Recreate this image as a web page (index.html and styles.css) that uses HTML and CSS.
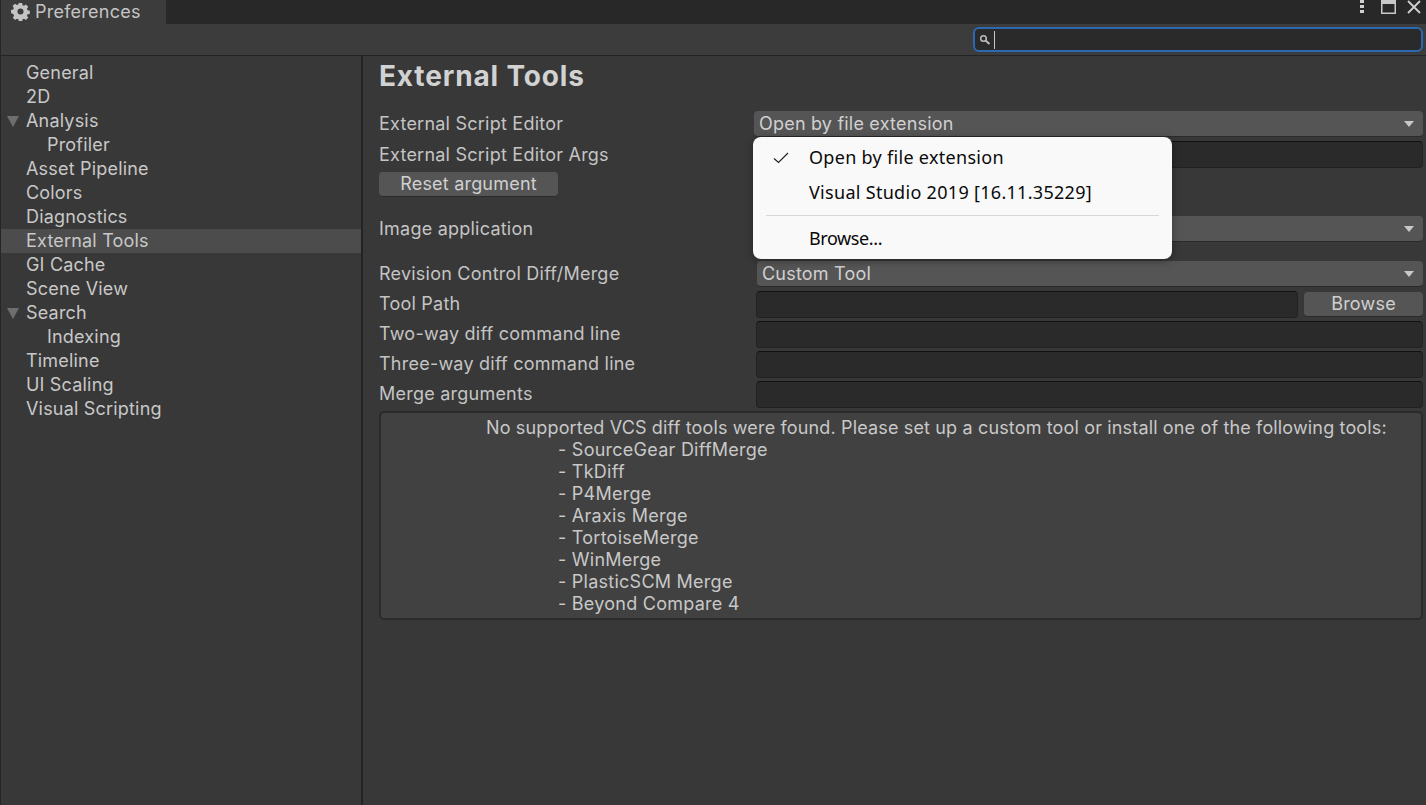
FILE: index.html
```html
<!DOCTYPE html>
<html lang="en">
<head>
<meta charset="utf-8">
<title>Preferences</title>
<link rel="stylesheet" href="styles.css">
</head>
<body>
<div class="window">
  <header class="titlebar">
    <div class="tab">
      <svg class="gear" viewBox="0 0 20 20" width="19" height="19"><path fill="#c4c4c4" fill-rule="evenodd" d="M8.3 1h3.4l.5 2.4 1.5.6 2-1.3 2.4 2.4-1.3 2 .6 1.5 2.4.5v3.4l-2.4.5-.6 1.5 1.3 2-2.4 2.4-2-1.3-1.500.6-.5 2.4H8.300l-.5-2.400-1.500-.6-2 1.300-2.400-2.400 1.300-2-.6-1.500L0 11.700V8.300l2.400-.5.6-1.500-1.300-2 2.400-2.400 2 1.300 1.500-.6zM10 6.800a3.200 3.200 0 1 0 0 6.400 3.200 3.200 0 0 0 0-6.400z"/></svg>
      <span>Preferences</span>
    </div>
    <div class="win-icons">
      <svg viewBox="0 0 5 14" width="5" height="14"><path fill="#d0d0d0" d="M0 0h4v3H0zM0 5h4v3H0zM0 10h4v3H0z"/></svg>
      <svg viewBox="0 0 15 14" width="15" height="14"><path fill="#c8c8c8" fill-rule="evenodd" d="M0 0h15v14H0zM1.500 4v8.500h12V4z"/></svg>
      <svg viewBox="0 0 14 14" width="14" height="14"><path stroke="#d0d0d0" stroke-width="1.800" fill="none" d="M1 1l12 12M13 1L1 13"/></svg>
    </div>
  </header>
  <div class="toolbar">
    <div class="search">
      <svg viewBox="0 0 12 12" width="12" height="12"><circle cx="4.500" cy="4.500" r="2.800" fill="none" stroke="#bdbdbd" stroke-width="1.500"/><path d="M6.800 6.800l3.700 3.200" stroke="#bdbdbd" stroke-width="2"/></svg>
      <i class="caret"></i>
    </div>
  </div>
  <div class="content">
    <nav class="sidebar">
      <div class="item">General</div>
      <div class="item">2D</div>
      <div class="item"><b class="tri"></b>Analysis</div>
      <div class="item sub">Profiler</div>
      <div class="item">Asset Pipeline</div>
      <div class="item">Colors</div>
      <div class="item">Diagnostics</div>
      <div class="item active">External Tools</div>
      <div class="item">GI Cache</div>
      <div class="item">Scene View</div>
      <div class="item"><b class="tri"></b>Search</div>
      <div class="item sub">Indexing</div>
      <div class="item">Timeline</div>
      <div class="item">UI Scaling</div>
      <div class="item">Visual Scripting</div>
    </nav>
    <main class="panel">
      <h1>External Tools</h1>
      <div class="row first"><label>External Script Editor</label><div class="drop wide">Open by file extension<b class="arrow"></b></div></div>
      <div class="row args"><label>External Script Editor Args</label><div class="field wide"></div></div>
      <button class="btn reset">Reset argument</button>
      <div class="row image"><label>Image application</label><div class="drop wide"><b class="arrow"></b></div></div>
      <div class="row rev"><label>Revision Control Diff/Merge</label><div class="drop">Custom Tool<b class="arrow"></b></div></div>
      <div class="row"><label>Tool Path</label><div class="field"></div><button class="btn browse">Browse</button></div>
      <div class="row"><label>Two-way diff command line</label><div class="field"></div></div>
      <div class="row"><label>Three-way diff command line</label><div class="field"></div></div>
      <div class="row"><label>Merge arguments</label><div class="field"></div></div>
      <div class="helpbox">
        <p class="lead">No supported VCS diff tools were found. Please set up a custom tool or install one of the following tools:</p>
        <p>- SourceGear DiffMerge</p>
        <p>- TkDiff</p>
        <p>- P4Merge</p>
        <p>- Araxis Merge</p>
        <p>- TortoiseMerge</p>
        <p>- WinMerge</p>
        <p>- PlasticSCM Merge</p>
        <p>- Beyond Compare 4</p>
      </div>
    </main>
  </div>
  <div class="menu">
    <div class="mi m1"><svg viewBox="0 0 16 12" width="16" height="12"><path d="M1 6.500l4.500 4L15 1" fill="none" stroke="#222" stroke-width="1.200"/></svg>Open by file extension</div>
    <div class="mi m2">Visual Studio 2019 [16.11.35229]</div>
    <hr>
    <div class="mi m3">Browse...</div>
  </div>
</div>
</body>
</html>
```
FILE: styles.css
```css
* { box-sizing: border-box; }
html, body { margin: 0; height: 100%; overflow: hidden; background: #383838; }
.window {
  position: relative; width: 1426px; height: 805px;
  display: flex; flex-direction: column;
  font-family: Inter, "Noto Sans", sans-serif; font-size: 18px; color: #c8c8c8;
  border-left: 1px solid #262626;
}
.titlebar { height: 24px; background: #282828; display: flex; justify-content: space-between; flex: none; }
.tab { width: 165px; background: #3c3c3c; display: flex; align-items: center; padding-left: 10px; padding-bottom: 2px; gap: 5px; letter-spacing: .25px; color: #c4c4c4; }
.gear { flex: none; }
.win-icons { display: flex; align-items: flex-start; padding-right: 5px; }
.win-icons svg:nth-child(1) { margin: 0 16px 0 0; }
.win-icons svg:nth-child(2) { margin: 0 11px 0 0; }
.toolbar { height: 32px; flex: none; background: #3c3c3c; border-bottom: 1px solid #232323; display: flex; justify-content: flex-end; padding: 3px 3px 0 0; align-items: flex-start; }
.search { width: 450px; height: 25px; background: #2a2a2a; border: 2px solid #2b69b0; border-radius: 6px; display: flex; align-items: center; padding-left: 4px; gap: 3px; }
.caret { width: 1px; height: 18px; background: #c8c8c8; }
.content { display: flex; flex: 1; min-height: 0; }
.sidebar { width: 362px; flex: none; padding-top: 5px; border-right: 2px solid #232323; background: #383838; }
.item { height: 24px; line-height: 24px; padding-left: 25px; letter-spacing: .19px; position: relative; color: #c8c8c8; }
.item.sub { padding-left: 46px; }
.item.active { background: #4c4c4c; }
.tri { position: absolute; left: 6px; top: 7px; border: 6px solid transparent; border-top: 11px solid #6e6e6e; border-bottom: 0; }
.panel { flex: 1; padding: 0 3px 0 16px; min-width: 0; }
h1 { margin: 0; height: 55px; padding-top: 3px; line-height: 34px; font-size: 28px; font-weight: 700; letter-spacing: .85px; color: #d2d2d2; }
.row { height: 26px; display: flex; align-items: center; margin-bottom: 4px; }
.row label { width: 377px; flex: none; padding-bottom: 1px; letter-spacing: .23px; color: #c4c4c4; }
.row .wide { margin-left: -2px; }
.row.args { margin-bottom: 4px; height: 27px; }
.row.image { margin-top: 19px; margin-bottom: 19px; }
.drop { flex: 1; height: 26px; background: #555; border-radius: 4px; border-bottom: 1px solid #2a2a2a; padding: 0 6px 0 5px; line-height: 25px; letter-spacing: .2px; position: relative; color: #d0d0d0; }
.rev .drop { margin-left: 1px; padding-left: 5px; }
.arrow { position: absolute; right: 9px; top: 10px; border: 5px solid transparent; border-top: 6px solid #c8c8c8; border-bottom: 0; }
.field { flex: 1; height: 27px; background: #2a2a2a; border-radius: 4px; border: 1px solid #212121; border-top-color: #111; }
.btn { font: inherit; color: #d0d0d0; background: #555; border: 0; border-bottom: 1px solid #2a2a2a; border-radius: 4px; height: 25px; padding: 0; letter-spacing: .2px; }
.reset { display: block; width: 179px; margin-bottom: 19px; padding-bottom: 2px; }
.browse { width: 119px; margin-left: 6px; height: 25px; flex: none; }
.helpbox { margin-top: 4px; height: 209px; background: #414141; border: 2px solid #2b2b2b; border-radius: 5px; padding: 4px 0 0 177px; letter-spacing: .25px; color: #c8c8c8; }
.helpbox p { margin: 0; height: 22px; line-height: 22px; }
.helpbox .lead { margin-left: -72px; white-space: nowrap; letter-spacing: .15px; }
.menu { position: absolute; left: 752px; top: 137px; width: 419px; height: 122px; background: #f9f9f9; border-radius: 8px; box-shadow: 0 2px 8px rgba(0,0,0,.35); font-family: "Noto Sans", sans-serif; color: #0a0a0a; font-size: 18px; letter-spacing: .3px; padding-top: 3px; }
.mi { height: 35px; line-height: 35px; padding-left: 56px; position: relative; }
.mi svg { position: absolute; left: 20px; top: 12px; }
.m3 { letter-spacing: -.4px; }
.menu hr { margin: 5px 13px 5px; border: 0; border-top: 1px solid #d8d8d8; }
```
